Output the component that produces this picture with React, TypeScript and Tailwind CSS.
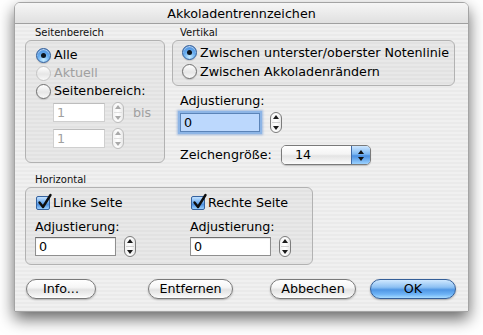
import clsx from 'clsx';

const ui = "font-['DejaVu_Sans',sans-serif]";

function Radio({ checked = false, disabled = false }: { checked?: boolean; disabled?: boolean }) {
  if (checked) {
    return (
      <span className="flex h-[15px] w-[15px] shrink-0 items-center justify-center rounded-full border border-[#2f5c98] bg-[radial-gradient(circle_at_50%_85%,#c8ecff_0%,#69aef0_45%,#3a7dd0_100%)] shadow-[inset_0_1px_1px_rgba(255,255,255,0.7),0_1px_1px_rgba(0,0,0,0.15)]">
        <span className="h-[5px] w-[5px] rounded-full bg-[#0d1620]" />
      </span>
    );
  }
  return (
    <span
      className={clsx(
        'h-[15px] w-[15px] shrink-0 rounded-full border bg-[linear-gradient(#ffffff,#e6e6e6_55%,#f8f8f8)]',
        disabled ? 'border-[#c4c4c4]' : 'border-[#6f6f6f] shadow-[0_1px_1px_rgba(0,0,0,0.15)]'
      )}
    />
  );
}

function Check() {
  return (
    <span className="relative h-[14px] w-[14px] shrink-0 rounded-[2px] border border-[#35629f] bg-[linear-gradient(#c3e2ff,#6aa9ee_50%,#4b8ee0_60%,#9ad0ff)]">
      <svg viewBox="0 0 16 16" className="absolute left-[0px] top-[-4px] h-[16px] w-[16px]">
        <path d="M2.5 9.5 L6 14 L13.5 2" stroke="#0e0e0e" strokeWidth="2.4" fill="none" strokeLinecap="round" strokeLinejoin="round" />
      </svg>
    </span>
  );
}

function Stepper({ disabled = false }: { disabled?: boolean }) {
  const c = disabled ? '#a9a9a9' : '#1a1a1a';
  return (
    <span
      className={clsx(
        'flex h-[21px] w-[12px] shrink-0 flex-col items-center justify-center rounded-[6px] border bg-[linear-gradient(90deg,#f2f2f2,#ffffff_50%,#e8e8e8)]',
        disabled ? 'border-[#bcbcbc]' : 'border-[#7c7c7c]'
      )}
    >
      <svg width="6" height="4" viewBox="0 0 6 4">
        <path d="M0 4 L3 0 L6 4 Z" fill={c} />
      </svg>
      <span className={clsx('my-[3px] h-px w-[8px]', disabled ? 'bg-[#e0e0e0]' : 'bg-[#d0d0d0]')} />
      <svg width="6" height="4" viewBox="0 0 6 4">
        <path d="M0 0 L3 4 L6 0 Z" fill={c} />
      </svg>
    </span>
  );
}

function Field({ value, w, disabled = false, focused = false }: { value: string; w: string; disabled?: boolean; focused?: boolean }) {
  return (
    <span
      className={clsx(
        'flex h-[19px] shrink-0 items-center border pl-[3px] text-[12.7px]',
        w,
        disabled
          ? 'border-[#cfcfcf] border-t-[#bdbdbd] bg-white text-[#a0a0a0]'
          : focused
            ? 'border-[#5b84b8] bg-[#bcd8fd] text-black shadow-[0_0_0_2px_#8db5e6,0_0_2px_3px_rgba(90,140,210,0.5)]'
            : 'border-[#8f8f8f] border-t-[#6e6e6e] bg-white text-black shadow-[inset_0_1px_1px_rgba(0,0,0,0.12)]'
      )}
    >
      {value}
    </span>
  );
}

function Button({ label, w, primary = false }: { label: string; w: string; primary?: boolean }) {
  return (
    <span
      className={clsx(
        'flex h-[20px] shrink-0 items-center justify-center rounded-full border text-[12.7px] text-black',
        w,
        primary
          ? 'border-[#355f98] bg-[linear-gradient(#cfe8ff,#8dc1f3_40%,#4f96e4_55%,#6fb4f6_80%,#a8dcff)] shadow-[0_1px_2px_rgba(0,0,0,0.3)]'
          : 'border-[#7a7a7a] bg-[linear-gradient(#ffffff,#f6f6f6_40%,#e2e2e2_55%,#f2f2f2_85%,#ffffff)] shadow-[0_1px_2px_rgba(0,0,0,0.25)]'
      )}
    >
      {label}
    </span>
  );
}

export default function App() {
  const stripes =
    'bg-[repeating-linear-gradient(180deg,#f0f0f0_0px,#f0f0f0_2px,#eaeaea_2px,#eaeaea_4px)]';
  const group = 'rounded-[6px] border border-[#b2b2b2] bg-[rgba(0,0,0,0.03)]';
  const small = 'h-[14px] text-[10px] leading-[14px] text-[#111]';

  return (
    <div className={clsx('h-[335px] w-[483px] overflow-hidden bg-white pl-[14px] pt-[2px] text-[12.7px] text-black', ui)}>
      <div className="flex h-[310px] w-[455px] flex-col overflow-hidden rounded-t-[6px] border border-[#a4a4a4] shadow-[0_7px_16px_rgba(0,0,0,0.6)]">
        <div className="flex h-[21px] shrink-0 items-center justify-center border-b border-[#a0a0a0] bg-[linear-gradient(#f6f6f6,#e0e0e0)] pt-[1px] text-[12.7px]">
          Akkoladentrennzeichen
        </div>
        <div className={clsx('flex flex-1 flex-col pl-[10px] pt-[2px]', stripes)}>
          <div className="flex gap-[7px]">
            {/* Seitenbereich */}
            <div className="flex w-[140px] flex-col">
              <div className={clsx(small, 'pl-[10px]')}>Seitenbereich</div>
              <div className={clsx(group, 'flex h-[123px] flex-col pl-[10px] pt-[5px]')}>
                <div className="flex h-[18px] items-center gap-[3px]">
                  <Radio checked />
                  <span>Alle</span>
                </div>
                <div className="flex h-[18px] items-center gap-[3px]">
                  <Radio disabled />
                  <span className="text-[#a0a0a0]">Aktuell</span>
                </div>
                <div className="flex h-[18px] items-center gap-[3px]">
                  <Radio />
                  <span>Seitenbereich:</span>
                </div>
                <div className="ml-[17px] mt-[2px] flex items-center">
                  <Field value="1" w="w-[52px]" disabled />
                  <span className="ml-[7px]">
                    <Stepper disabled />
                  </span>
                  <span className="ml-[9px] text-[#a0a0a0]">bis</span>
                </div>
                <div className="ml-[17px] mt-[5px] flex items-center">
                  <Field value="1" w="w-[52px]" disabled />
                  <span className="ml-[7px]">
                    <Stepper disabled />
                  </span>
                </div>
              </div>
            </div>

            {/* Vertikal */}
            <div className="flex w-[283px] flex-col">
              <div className={clsx(small, 'pl-[8px]')}>Vertikal</div>
              <div className={clsx(group, 'flex h-[46px] flex-col pl-[9px] pt-[2px]')}>
                <div className="flex h-[19px] items-center gap-[3px]">
                  <Radio checked />
                  <span>Zwischen unterster/oberster Notenlinie</span>
                </div>
                <div className="flex h-[19px] items-center gap-[3px]">
                  <Radio />
                  <span>Zwischen Akkoladenrändern</span>
                </div>
              </div>
              <div className="mt-[8px] h-[14px] pl-[8px] leading-[14px]">Adjustierung:</div>
              <div className="mt-[4px] flex h-[21px] items-center pl-[8px]">
                <Field value="0" w="w-[80px]" focused />
                <span className="ml-[10px]">
                  <Stepper />
                </span>
              </div>
              <div className="mt-[12px] flex h-[20px] items-center pl-[8px]">
                <span className="w-[101px]">Zeichengröße:</span>
                <div className="flex h-[20px] w-[90px] overflow-hidden rounded-[5px] border border-[#7a7a7a] shadow-[0_1px_1px_rgba(0,0,0,0.2)]">
                  <span className="flex flex-1 items-center bg-[linear-gradient(#ffffff,#f4f4f4_45%,#e4e4e4_55%,#fbfbfb)] pl-[13px]">14</span>
                  <span className="flex w-[19px] flex-col items-center justify-center gap-[3px] border-l border-[#3f6aa6] bg-[linear-gradient(#cde6ff,#7db8f2_45%,#4a8fe0_55%,#9bd2ff)]">
                    <svg width="6" height="4" viewBox="0 0 6 4">
                      <path d="M0 4 L3 0 L6 4 Z" fill="#111" />
                    </svg>
                    <svg width="6" height="4" viewBox="0 0 6 4">
                      <path d="M0 0 L3 4 L6 0 Z" fill="#111" />
                    </svg>
                  </span>
                </div>
              </div>
            </div>
          </div>

          {/* Horizontal */}
          <div className={clsx(small, 'mt-[8px] pl-[10px]')}>Horizontal</div>
          <div className={clsx(group, 'flex h-[78px] w-[288px] pl-[9px] pt-[6px]')}>
            {[
              ['Linke Seite', 'w-[155px]'],
              ['Rechte Seite', 'w-[120px]'],
            ].map(([label, w]) => (
              <div key={label} className={clsx('flex flex-col', w)}>
                <div className="ml-[1px] flex h-[18px] items-center gap-[3px]">
                  <Check />
                  <span>{label}</span>
                </div>
                <div className="mt-[8px] h-[14px] leading-[14px]">Adjustierung:</div>
                <div className="mt-[2px] flex h-[21px] items-center">
                  <Field value="0" w="w-[81px]" />
                  <span className="ml-[8px]">
                    <Stepper />
                  </span>
                </div>
              </div>
            ))}
          </div>

          <div className="mt-[14px] flex items-center pl-[1px]">
            <Button label="Info..." w="w-[70px]" />
            <span className="ml-[52px]">
              <Button label="Entfernen" w="w-[85px]" />
            </span>
            <span className="ml-[37px]">
              <Button label="Abbechen" w="w-[86px]" />
            </span>
            <span className="ml-[14px]">
              <Button label="OK" w="w-[86px]" primary />
            </span>
          </div>
        </div>
      </div>
    </div>
  );
}
